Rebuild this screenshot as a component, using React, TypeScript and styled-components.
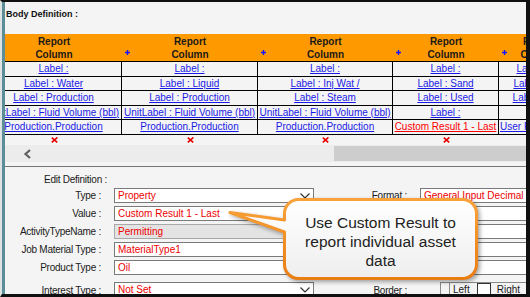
import React from 'react';
import styled, { createGlobalStyle } from 'styled-components';

const GlobalStyle = createGlobalStyle`
  html, body { margin: 0; padding: 0; background: #ffffff; }
  body { font-family: "Liberation Sans", Arial, sans-serif; }
`;

const Frame = styled.div`
  position: relative;
  width: 530px;
  height: 297px;
  box-sizing: border-box;
  display: flex;
  background: #f4f4f4;
  border-top: 2px solid #101010;
  border-right: 4px solid #101010;
  border-bottom: 3px solid #101010;
  border-left: 2px solid #dde2e2;
  overflow: hidden;
`;

const SideStrip = styled.div`
  flex: none;
  width: 3px;
  background: #5d8d96;
`;

const Content = styled.div`
  flex: 1;
  min-width: 0;
  display: flex;
  flex-direction: column;
  overflow: hidden;
`;

const SectionTitle = styled.div`
  flex: none;
  height: 32px;
  box-sizing: border-box;
  padding: 6px 0 0 1px;
  font-size: 9px;
  line-height: 12px;
  font-weight: bold;
  color: #111;
`;

const TableViewport = styled.div`
  flex: none;
  overflow: hidden;
`;

const ColumnsGrid = styled.div`
  display: grid;
  grid-template-columns: 136px 136px 135px 106px 80px;
  grid-template-rows: 28px 15px 14px 15px 14px 15px 10px;
  margin-left: -19px;
  width: max-content;
`;

const HeadCell = styled.div`
  display: grid;
  grid-template-columns: 12px 1fr 12px;
  box-sizing: border-box;
  padding-top: 1px;
  background: #ff9900;
  border-bottom: 1px solid #000;
`;

const AddMark = styled.svg`
  align-self: start;
  margin: 15px 0 0 3px;
`;

const HeadText = styled.div`
  text-align: center;
  font-size: 10px;
  line-height: 13.3px;
  font-weight: bold;
  color: #1a1a1a;
  white-space: nowrap;
`;

const DataCell = styled.div<{ $startOverflow?: boolean }>`
  box-sizing: border-box;
  display: flex;
  align-items: center;
  justify-content: ${(p) => (p.$startOverflow ? 'safe center' : 'center')};
  padding-left: ${(p) => (p.$startOverflow ? 1 : 0)}px;
  border-right: 1px solid #000;
  border-bottom: 1px solid #000;
  white-space: nowrap;
`;

const CellLink = styled.a<{ $alert?: boolean }>`
  font-size: 10px;
  line-height: 12px;
  color: ${(p) => (p.$alert ? '#ff0000' : '#1a1ae6')};
  text-decoration: underline;
`;

const MarkCell = styled.div`
  display: flex;
  align-items: center;
  justify-content: center;
`;

const HScroll = styled.div`
  flex: none;
  height: 17px;
  background: #ececec;
  display: flex;
  align-items: flex-start;
`;

const ScrollArrow = styled.div`
  width: 45px;
  height: 17px;
  display: flex;
  align-items: center;
  justify-content: center;
`;

const ScrollSpace = styled.div`
  flex: 1;
`;

const ScrollThumb = styled.div`
  width: 192px;
  height: 15px;
  margin-top: 1px;
  background: #cdcdcd;
`;

const Divider = styled.div`
  flex: none;
  margin-top: 4px;
  height: 1px;
  background: #767676;
`;

const EditPanel = styled.div`
  flex: 1;
  padding-top: 7px;
`;

const PanelTitle = styled.div`
  margin: 0 0 2px 39px;
  font-size: 10px;
  letter-spacing: -0.25px;
  line-height: 12px;
  color: #1a1a1a;
`;

const FormStack = styled.div`
  display: flex;
  flex-direction: column;
  gap: 3px;
`;

const FormRow = styled.div<{ $spaced?: boolean }>`
  display: grid;
  grid-template-columns: 96px 200px 80px 130px;
  column-gap: 13px;
  height: 15px;
  margin-top: ${(p) => (p.$spaced ? 4 : 0)}px;
`;

const FieldLabel = styled.div`
  display: flex;
  align-items: center;
  justify-content: flex-end;
  font-size: 10px;
  letter-spacing: -0.25px;
  color: #1a1a1a;
  white-space: nowrap;
`;

const TextBox = styled.div<{ $disabled?: boolean }>`
  box-sizing: border-box;
  height: 15px;
  display: flex;
  align-items: center;
  justify-content: space-between;
  padding: 0 3px;
  border: 1px solid ${(p) => (p.$disabled ? '#a8a8a8' : '#7a7a7a')};
  background: ${(p) => (p.$disabled ? '#e3e3e3' : '#ffffff')};
  font-size: 10px;
  color: #ee0000;
  white-space: nowrap;
  overflow: hidden;
`;

const BorderGroup = styled.div`
  display: flex;
  align-items: flex-start;
  margin-left: 20px;
  height: 15px;
  border-top: 1px solid #8a8a8a;
  border-left: 1px solid #8a8a8a;
  font-size: 10px;
  color: #1a1a1a;
`;

const GroupNotch = styled.div`
  width: 8px;
  height: 15px;
  border-right: 1px solid #8a8a8a;
`;

const OptionText = styled.span<{ $gap: number }>`
  margin-left: ${(p) => p.$gap}px;
  line-height: 14px;
`;

const CheckBox = styled.div`
  margin-left: 7px;
  width: 14px;
  height: 14px;
  box-sizing: border-box;
  border: 1px solid #333;
  background: #fff;
`;

const Callout = styled.div`
  position: absolute;
  left: 224px;
  top: 192px;
  width: 260px;
  height: 94px;
  display: grid;
  pointer-events: none;
`;

const CalloutShape = styled.svg`
  grid-area: 1 / 1;
  overflow: visible;
  filter: drop-shadow(2px 2px 2px rgba(0, 0, 0, 0.35));
`;

const CalloutText = styled.div`
  grid-area: 1 / 1;
  position: relative;
  z-index: 1;
  box-sizing: border-box;
  width: 252px;
  padding: 19px 0 0 57px;
  text-align: center;
  font-size: 15.5px;
  line-height: 19px;
  color: #222;
`;

const CalloutLines = styled.div`
  width: 195px;
`;

type Col = { cells: string[]; alert?: number };

const columns: Col[] = [
  { cells: ['Label :', 'Label : Water', 'Label : Production', 'UnitLabel : Fluid Volume (bbl)', 'Production.Production'] },
  { cells: ['Label :', 'Label : Liquid', 'Label : Production', 'UnitLabel : Fluid Volume (bbl)', 'Production.Production'] },
  { cells: ['Label :', 'Label : Inj Wat /', 'Label : Steam', 'UnitLabel : Fluid Volume (bbl)', 'Production.Production'] },
  { cells: ['Label :', 'Label : Sand', 'Label : Used', 'Label :', 'Custom Result 1 - Last'], alert: 4 },
  { cells: ['Label : Oil', 'Label : Gas', 'Label : Sold', '', 'User Result 1 - Sum'] },
];

const RemoveMark = () => (
  <svg width="7" height="6" viewBox="0 0 7 6">
    <path d="M0.8 0.6 L6.2 5.4 M6.4 0.4 L0.8 5.4" stroke="#e60000" strokeWidth="1.6" fill="none" />
  </svg>
);

const Chevron = () => (
  <svg width="10" height="6" viewBox="0 0 10 6">
    <path d="M0.5 0.5 L5 5 L9.5 0.5" stroke="#333" strokeWidth="1.2" fill="none" />
  </svg>
);

const LeftArrow = () => (
  <svg width="9" height="10" viewBox="0 0 9 10">
    <path d="M7 1 L2.5 5 L7 9" stroke="#606060" strokeWidth="2.2" fill="none" />
  </svg>
);

const formRows = [
  { label: 'Type :', value: 'Property', select: true },
  { label: 'Value :', value: 'Custom Result 1 - Last' },
  { label: 'ActivityTypeName :', value: 'Permitting', disabled: true },
  { label: 'Job Material Type :', value: 'MaterialType1' },
  { label: 'Product Type :', value: 'Oil' },
];

export default function App() {
  return (
    <>
      <GlobalStyle />
      <Frame>
        <SideStrip />
        <Content>
          <SectionTitle>Body Definition :</SectionTitle>
          <TableViewport>
            <ColumnsGrid>
              {columns.map((_, i) => (
                <HeadCell key={`h${i}`}>
                  <AddMark width="5" height="5" viewBox="0 0 5 5">
                    <path d="M2.5 0 V5 M0 2.5 H5" stroke="#1414ff" strokeWidth="1.4" />
                  </AddMark>
                  <HeadText>
                    Report
                    <br />
                    Column
                  </HeadText>
                </HeadCell>
              ))}
              {[0, 1, 2, 3, 4].map((r) => (
                <React.Fragment key={`r${r}`}>
                  {columns.map((c, ci) => (
                    <DataCell key={`c${ci}`} $startOverflow={ci === columns.length - 1}>
                      {c.cells[r] && (
                        <CellLink href="#" $alert={c.alert === r}>
                          {c.cells[r]}
                        </CellLink>
                      )}
                    </DataCell>
                  ))}
                </React.Fragment>
              ))}
              {columns.map((_, ci) => (
                <MarkCell key={`x${ci}`}>{ci < 4 && <RemoveMark />}</MarkCell>
              ))}
            </ColumnsGrid>
          </TableViewport>
          <HScroll>
            <ScrollArrow>
              <LeftArrow />
            </ScrollArrow>
            <ScrollSpace />
            <ScrollThumb />
          </HScroll>
          <Divider />
          <EditPanel>
            <PanelTitle>Edit Definition :</PanelTitle>
            <FormStack>
              {formRows.map((f, i) => (
                <FormRow key={f.label}>
                  <FieldLabel>{f.label}</FieldLabel>
                  <TextBox $disabled={f.disabled}>
                    <span>{f.value}</span>
                    {f.select && <Chevron />}
                  </TextBox>
                  <FieldLabel>{i === 0 ? 'Format :' : ''}</FieldLabel>
                  <TextBox>{i === 0 ? 'General Input Decimal' : ''}</TextBox>
                </FormRow>
              ))}
              <FormRow $spaced>
                <FieldLabel>Interest Type :</FieldLabel>
                <TextBox>
                  <span>Not Set</span>
                  <Chevron />
                </TextBox>
                <FieldLabel>Border :</FieldLabel>
                <BorderGroup>
                  <GroupNotch />
                  <OptionText $gap={3}>Left</OptionText>
                  <CheckBox />
                  <OptionText $gap={6}>Right</OptionText>
                </BorderGroup>
              </FormRow>
            </FormStack>
          </EditPanel>
        </Content>
        <Callout>
          <CalloutShape width="260" height="94" viewBox="0 0 260 94">
            <defs>
              <linearGradient id="calloutFill" x1="0" y1="0" x2="0" y2="1">
                <stop offset="0" stopColor="#ffffff" />
                <stop offset="1" stopColor="#eeeeee" />
              </linearGradient>
              <linearGradient id="calloutStroke" x1="0" y1="0" x2="0" y2="1">
                <stop offset="0" stopColor="#f9a23a" />
                <stop offset="1" stopColor="#ea7d12" />
              </linearGradient>
            </defs>
            <path
              d="M72.5 5.5 H236.5 A14 14 0 0 1 250.5 19.5 V70.5 A14 14 0 0 1 236.5 84.5 H72.5 A14 14 0 0 1 58.5 70.5 V38 L4 18.5 L58.5 26 V19.5 A14 14 0 0 1 72.5 5.5 Z"
              fill="url(#calloutFill)"
              stroke="url(#calloutStroke)"
              strokeWidth="3"
              strokeLinejoin="round"
            />
          </CalloutShape>
          <CalloutText>
            <CalloutLines>
              Use Custom Result to
              <br />
              report individual asset
              <br />
              data
            </CalloutLines>
          </CalloutText>
        </Callout>
      </Frame>
    </>
  );
}
